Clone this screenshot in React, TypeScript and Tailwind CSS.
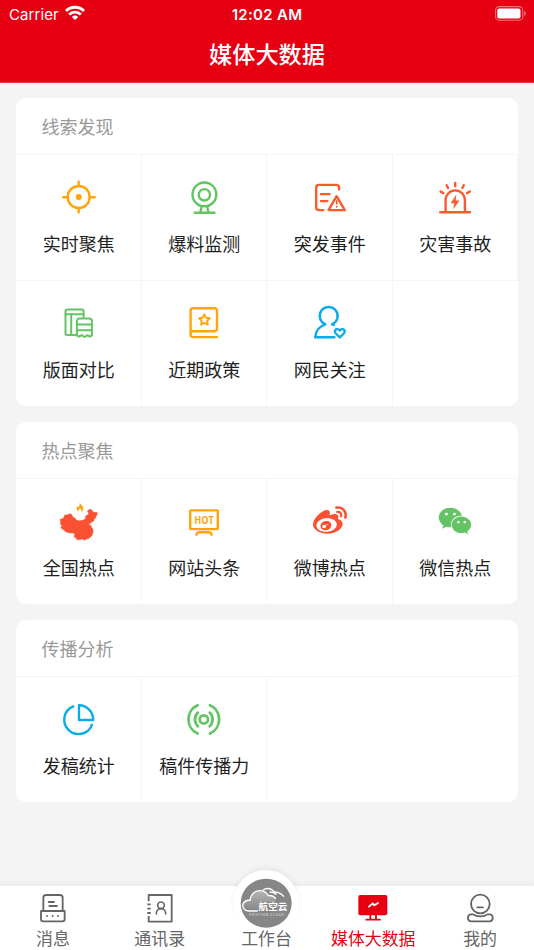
import type { ReactNode } from "react";
import { FaWeibo, FaWeixin } from "react-icons/fa";

type Item = { label: string; icon: ReactNode };

const ORANGE = "#ffa50a";
const GREEN = "#62c462";
const RED = "#fb5b2c";
const BLUE = "#0aace9";

function Icon({ color, children }: { color: string; children: ReactNode }) {
  return (
    <svg
      viewBox="0 0 48 48"
      className="size-12"
      fill="none"
      stroke={color}
      strokeWidth="2.4"
      strokeLinecap="round"
      strokeLinejoin="round"
    >
      {children}
    </svg>
  );
}

function TabIcon({ children }: { children: ReactNode }) {
  return (
    <svg
      viewBox="0 0 102 102"
      className="size-[34px]"
      fill="none"
      stroke="#666"
      strokeWidth="5.5"
      strokeLinecap="round"
      strokeLinejoin="round"
    >
      {children}
    </svg>
  );
}

const clues: Item[] = [
  {
    label: "实时聚焦",
    icon: (
      <Icon color={ORANGE}>
        <circle cx="23.7" cy="24" r="11" />
        <path d="M23.7 8.6V13M23.7 35v4.4M8.2 24.2h4.5M34.7 24.2h4.9" />
        <circle cx="23.8" cy="23.9" r="3" fill={ORANGE} stroke="none" />
      </Icon>
    ),
  },
  {
    label: "爆料监测",
    icon: (
      <Icon color={GREEN}>
        <circle cx="24.4" cy="21.4" r="11.9" />
        <circle cx="24.4" cy="21.8" r="5.7" />
        <path d="M21.6 33.8l-1.2 5.4M27.2 33.8l1.2 5.4M14.8 39.7h19.6" />
      </Icon>
    ),
  },
  {
    label: "突发事件",
    icon: (
      <Icon color={RED}>
        <path d="M33.1 16.6V14.6a2.8 2.8 0 0 0-2.8-2.7H13a2.8 2.8 0 0 0-2.8 2.8v19.6a2.8 2.8 0 0 0 2.8 2.8h4.2" />
        <path d="M15 21.1h8.6M15 28.1h6.4" />
        <path d="M30.6 23.2l8.2 13.9H22.6z" />
        <path d="M30.7 28v2.6M30.7 33.7v.1" strokeWidth="1.8" />
      </Icon>
    ),
  },
  {
    label: "灾害事故",
    icon: (
      <Icon color={RED}>
        <path d="M14.6 38.5V27.3a9.6 9.9 0 0 1 19.3 0v11.2M9.2 39.2h29.8" />
        <path d="M24.2 10v3.2M15.6 12.2l1.4 2.7M32.8 12.2l-1.4 2.7M9.6 18.6l2.8 1.5M38.8 18.6l-2.8 1.5" />
        <path
          d="M25.3 21.4l-5.6 8.9h3.5l-.9 5.9 6.2-8.8H24.7z"
          fill={RED}
          stroke="none"
        />
      </Icon>
    ),
  },
  {
    label: "版面对比",
    icon: (
      <Icon color={GREEN}>
        <g strokeWidth="2">
          <path d="M28.6 18V12.2a1.7 1.7 0 0 0-1.7-1.7H12.2a1.7 1.7 0 0 0-1.7 1.7v22a1.7 1.7 0 0 0 1.7 1.7h8.3" />
          <path d="M10.6 15.3h18M16.2 15.3v20.5" />
          <path d="M21.9 36.7V22a2.6 2.6 0 0 1 2.6-2.6h9.8a2.6 2.6 0 0 1 2.6 2.6v14.7l-2 1-2.4-1.6-2.9 1.9-2.9-1.9-2.5 1.6z" />
          <path d="M22 25.4h14.8M22 31.2h14.8" />
        </g>
      </Icon>
    ),
  },
  {
    label: "近期政策",
    icon: (
      <Icon color={ORANGE}>
        <path d="M37 38.1H12.9a2.3 2.3 0 0 1-2.3-2.3V11.5a2.3 2.3 0 0 1 2.3-2.3h21.8A2.3 2.3 0 0 1 37 11.5v18.4a2.3 2.3 0 0 1-2.3 2.3H12.9a2.3 2.3 0 0 0-2.3 2.3" />
        <path
          d="M24.4 15.4l1.7 3.4 3.7.5-2.7 2.6.7 3.7-3.4-1.7-3.4 1.7.7-3.7-2.7-2.6 3.7-.5z"
          strokeWidth="1.9"
        />
      </Icon>
    ),
  },
  {
    label: "网民关注",
    icon: (
      <Icon color={BLUE}>
        <path d="M19.4 25.4a9 9 0 1 1 6.6 0M19.4 25.4C13 27.5 9.6 31.5 9.2 38.2H28.4M26 25.4l1.8.5" />
        <path d="M33.8 38.4l-4-3.9c-2.8-3.3 1.8-6.4 4-3 2.2-3.4 6.8-.3 4 3z" />
      </Icon>
    ),
  },
];

const hotspots: Item[] = [
  {
    label: "全国热点",
    icon: (
      <svg viewBox="134.25 51 144 144" className="size-12">
        <path
          fill="#fa5132"
          stroke="#fa5132"
          strokeWidth="2"
          strokeLinejoin="round"
          d="M149 119L160 115 164 105 171 105 180 101 185 105 187 111 194 114 197 120 208 123 221 120 227 114 226 108 234 104 236 99 232 96 234 91 240 88 245 91 249 97 261 98 260 105 257 108 256 114 251 117 251 122 243 127 237 132 235 136 242 136 243 141 248 148 248 158 244 168 236 175 226 178 222 181 216 176 208 179 199 178 198 173 192 171 194 162 188 158 178 159 167 155 158 148 152 143 155 137 150 131 152 125z"
        />
        <path
          fill={ORANGE}
          d="M208 68c4 5 11 11 11 18 0 5-2 8-6 10 2-6-1-8-4-11-4 4-5 6-4 10-4-2-6-6-6-10 0-3 1-5 3-7l2 4c3-3 5-8 4-14z"
        />
      </svg>
    ),
  },
  {
    label: "网站头条",
    icon: (
      <Icon color={ORANGE}>
        <rect x="10.2" y="13.4" width="27.6" height="18.7" rx="0.6" strokeWidth="2.4" />
        <path d="M16.4 37.7c.3-2 1.2-2.5 2.6-2.5h10c1.4 0 2.3.5 2.6 2.5" />
        <text
          x="14.2"
          y="26.6"
          textLength="19.6"
          lengthAdjust="spacingAndGlyphs"
          className="font-['Open_Sans',sans-serif] text-[9.8px] font-bold"
          fill={ORANGE}
          stroke="none"
        >
          HOT
        </text>
      </Icon>
    ),
  },
  { label: "微博热点", icon: <FaWeibo size={34} color="#fa5132" /> },
  { label: "微信热点", icon: <FaWeixin size={34} color={GREEN} /> },
];

const analysis: Item[] = [
  {
    label: "发稿统计",
    icon: (
      <Icon color={BLUE}>
        <path d="M18.4 11.4A14.3 14.3 0 1 0 36.9 29.8" />
        <path d="M24 10.2V25h14.2A14.6 14.6 0 0 0 24 10.2z" />
      </Icon>
    ),
  },
  {
    label: "稿件传播力",
    icon: (
      <Icon color={GREEN}>
        <g strokeWidth="2.7">
          <circle cx="23.8" cy="24.4" r="4.1" />
          <path d="M17.9 17.6a9.4 9.4 0 0 0 0 13.6M29.7 17.6a9.4 9.4 0 0 1 0 13.6" />
          <path d="M17.6 10.2a15.6 15.6 0 0 0 0 28.4M30 10.2a15.6 15.6 0 0 1 0 28.4" />
        </g>
      </Icon>
    ),
  },
];

function Section({ title, items }: { title: string; items: Item[] }) {
  const blanks = (4 - (items.length % 4)) % 4;

  return (
    <section className="overflow-hidden rounded-[10px] bg-white">
      <h2 className="flex h-14 items-center pt-px pl-[25.5px] text-[18px] text-[#999]">
        {title}
      </h2>
      <div className="grid grid-cols-4">
        {items.map((item) => (
          <div
            key={item.label}
            className="flex h-[126px] flex-col items-center border-t border-r border-[#f5f5f5] pt-[18px] pl-px"
          >
            <div className="flex size-12 items-center justify-center">
              {item.icon}
            </div>
            <span className="mt-[9px] text-[18px] leading-[26px] whitespace-nowrap text-[#1f1f1f]">
              {item.label}
            </span>
          </div>
        ))}
        {Array.from({ length: blanks }, (_, i) => (
          <div key={i} className="border-t border-[#f5f5f5]" />
        ))}
      </div>
    </section>
  );
}

function CloudLogo() {
  return (
    <svg viewBox="58 49 156 156" className="size-[52px]">
      <defs>
        <linearGradient id="cloud" x1="0" y1="0" x2="0" y2="1">
          <stop offset="0" stopColor="#b4b4b4" />
          <stop offset="1" stopColor="#868686" />
        </linearGradient>
      </defs>
      <ellipse cx="136.5" cy="127.5" rx="76.5" ry="73.5" fill="#868686" />
      <path
        d="M84 151c-14-1-21-13-16-23 4-7 11-10 20-9 2-18 14-29 29-29 13 0 21 6 26 15 9-2 17 2 22 8v12h-50v26z"
        fill="url(#cloud)"
      />
      <g fill="none" stroke="#fff" strokeWidth="4" strokeLinecap="round">
        <path d="M110 151H84c-14-1-21-13-16-23 4-7 11-10 20-9 2-18 14-29 29-29 13 0 21 6 26 15 9-2 17 2 22 8" />
        <path d="M128 88c7-6 22-8 33 6 10 0 20 4 28 13M148 94c8 0 13 2 18 7" />
      </g>
      <text
        x="157"
        y="148"
        textAnchor="middle"
        fill="#fff"
        className="text-[29px] font-bold"
      >
        航空云
      </text>
      <text
        x="137"
        y="167"
        textAnchor="middle"
        textLength="104"
        fill="#d5d5d5"
        className="font-['Inter',sans-serif] text-[9px] font-semibold"
      >
        AVIATION CLOUD
      </text>
    </svg>
  );
}

const tabs: { label: string; active?: boolean; icon: ReactNode }[] = [
  {
    label: "消息",
    icon: (
      <TabIcon>
        <path d="M22 60V20a8 8 0 0 1 8-8h42a8 8 0 0 1 8 8v40" />
        <path d="M15 60h71v24a7 7 0 0 1-7 7H22a7 7 0 0 1-7-7z" />
        <path d="M38 33h16M40 45h23M33 75h.1M50 75h.1M66 75h.1" />
      </TabIcon>
    ),
  },
  {
    label: "通讯录",
    icon: (
      <TabIcon>
        <g strokeLinecap="butt">
          <path d="M17 31V12h69v80H17V75" />
          <path d="M13 40h10M13 53h10M13 66h10" />
        </g>
        <circle cx="54" cy="43" r="10" strokeWidth="5" />
        <path d="M40 68c0-20 28-20 28 0" strokeWidth="5" />
      </TabIcon>
    ),
  },
  { label: "工作台", icon: null },
  {
    label: "媒体大数据",
    active: true,
    icon: (
      <TabIcon>
        <rect x="4" y="12" width="87" height="61" rx="6" fill="#e60012" stroke="none" />
        <path d="M40 73v12M57 73v12M28 86h41" stroke="#e60012" />
        <path d="M36 47l11-10 5 6 11-7" stroke="#fff" />
      </TabIcon>
    ),
  },
  {
    label: "我的",
    icon: (
      <TabIcon>
        <circle cx="49" cy="39" r="28" />
        <path d="M40 49h17" />
        <path d="M28 70c9 8 33 8 42 0h8c11 2 11 19 0 21H20c-11-2-11-19 0-21z" />
        <path d="M93 10v78" stroke="#f1f0fa" strokeWidth="3" />
      </TabIcon>
    ),
  },
];

function StatusBar() {
  return (
    <div className="grid h-7 grid-cols-3 items-center px-[9px] font-['Inter',sans-serif] text-[15px] leading-none">
      <div className="flex items-center gap-1.5">
        <span className="tracking-[0.1px]">Carrier</span>
        <svg viewBox="0 0 20 15" className="-mt-[3px] h-[15px] w-5">
          <g fill="none" stroke="#fff" strokeWidth="2.9">
            <path d="M1 6a12.8 12.8 0 0 1 18 0" />
            <path d="M4.2 9.6a8.1 8.1 0 0 1 11.6 0" />
          </g>
          <path d="M10 15l-3.2-3a4.7 4.7 0 0 1 6.4 0z" fill="#fff" />
        </svg>
      </div>
      <span className="pt-px text-center text-[15px] font-semibold tracking-[0.3px] whitespace-nowrap">
        12:02 AM
      </span>
      <svg viewBox="0 0 32 15" className="-mt-px -mr-[2px] h-[15px] w-8 justify-self-end">
        <rect
          x="0.6"
          y="0.6"
          width="27.2"
          height="13.6"
          rx="3.8"
          fill="none"
          stroke="#fff"
          strokeOpacity="0.45"
          strokeWidth="1.1"
        />
        <rect x="2.3" y="2.4" width="23.2" height="10" rx="2" fill="#fff" />
        <path d="M29.3 5v5c1.9-.8 1.9-4.2 0-5z" fill="#fff" fillOpacity="0.5" />
      </svg>
    </div>
  );
}

export default function App() {
  return (
    <div className="flex h-[950px] w-[534px] flex-col overflow-hidden bg-[#f4f4f4] font-['Noto_Sans_CJK_SC',sans-serif]">
      <header className="h-[83px] border-b border-[#ea3040] bg-[#e60012] text-white">
        <StatusBar />
        <h1 className="text-center text-[23.2px] leading-[50px] font-medium">
          媒体大数据
        </h1>
      </header>

      <main className="flex flex-1 flex-col gap-4 px-4 pt-[15px]">
        <Section title="线索发现" items={clues} />
        <Section title="热点聚焦" items={hotspots} />
        <Section title="传播分析" items={analysis} />
      </main>

      <nav className="relative grid h-16 grid-cols-5 bg-white shadow-[0_-2px_6px_rgba(0,0,0,0.05)]">
        {/* raised button behind the middle tab */}
        <div className="absolute -top-4 left-[232.5px] flex size-[66px] items-center justify-center rounded-full bg-white shadow-[0_-3px_5px_rgba(0,0,0,0.05)]">
          <CloudLogo />
        </div>
        {tabs.map((tab) => (
          <div
            key={tab.label}
            className="relative flex flex-col items-center pt-[5px]"
          >
            <div className="h-[34px]">{tab.icon}</div>
            <span
              className={
                tab.active
                  ? "mt-px mr-px text-[16.9px] leading-6 whitespace-nowrap text-[#e60012]"
                  : "mt-px mr-px text-[16.9px] leading-6 whitespace-nowrap text-[#666]"
              }
            >
              {tab.label}
            </span>
          </div>
        ))}
      </nav>
    </div>
  );
}
